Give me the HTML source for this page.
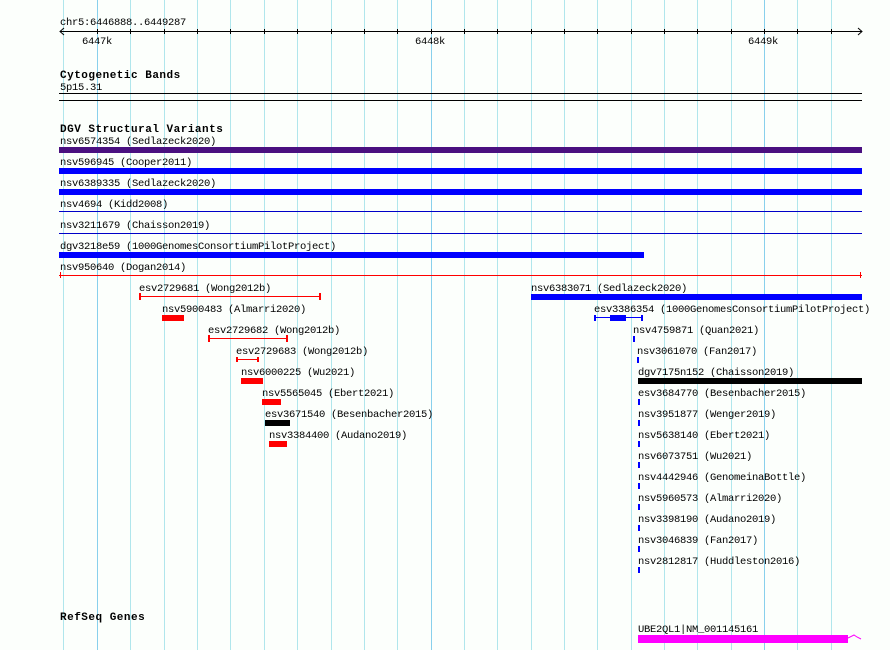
<!DOCTYPE html>
<html><head><meta charset="utf-8"><style>
html,body{margin:0;padding:0;background:#fcfffc;}
svg{display:block;}
text{font-family:"Liberation Mono","DejaVu Sans Mono",monospace;font-size:10.5px;letter-spacing:-0.3px;fill:#000;}
.h{font-weight:bold;font-size:11px;letter-spacing:0.5px;}
</style></head><body>
<svg width="890" height="650" xmlns="http://www.w3.org/2000/svg">
<rect width="890" height="650" fill="#fcfffc"/>
<g stroke="#b0e6ec" stroke-width="1">
<line x1="63.5" y1="0" x2="63.5" y2="650"/>
<line x1="130.5" y1="0" x2="130.5" y2="650"/>
<line x1="164.5" y1="0" x2="164.5" y2="650"/>
<line x1="197.5" y1="0" x2="197.5" y2="650"/>
<line x1="230.5" y1="0" x2="230.5" y2="650"/>
<line x1="264.5" y1="0" x2="264.5" y2="650"/>
<line x1="297.5" y1="0" x2="297.5" y2="650"/>
<line x1="331.5" y1="0" x2="331.5" y2="650"/>
<line x1="364.5" y1="0" x2="364.5" y2="650"/>
<line x1="397.5" y1="0" x2="397.5" y2="650"/>
<line x1="464.5" y1="0" x2="464.5" y2="650"/>
<line x1="497.5" y1="0" x2="497.5" y2="650"/>
<line x1="531.5" y1="0" x2="531.5" y2="650"/>
<line x1="564.5" y1="0" x2="564.5" y2="650"/>
<line x1="597.5" y1="0" x2="597.5" y2="650"/>
<line x1="631.5" y1="0" x2="631.5" y2="650"/>
<line x1="664.5" y1="0" x2="664.5" y2="650"/>
<line x1="697.5" y1="0" x2="697.5" y2="650"/>
<line x1="731.5" y1="0" x2="731.5" y2="650"/>
<line x1="797.5" y1="0" x2="797.5" y2="650"/>
<line x1="831.5" y1="0" x2="831.5" y2="650"/>
</g>
<g stroke="#88d0ec" stroke-width="1">
<line x1="97.5" y1="0" x2="97.5" y2="650"/>
<line x1="431.5" y1="0" x2="431.5" y2="650"/>
<line x1="764.5" y1="0" x2="764.5" y2="650"/>
</g>
<text x="60" y="25">chr5:6446888..6449287</text>
<g stroke="#000" stroke-width="1" fill="none">
<line x1="60" y1="31.5" x2="862" y2="31.5"/>
<polyline points="64,28 60,31.5 64,35"/>
<polyline points="858,28 862,31.5 858,35"/>
<path d="M97.5 29v5M130.5 29v5M164.5 29v5M197.5 29v5M230.5 29v5M264.5 29v5M297.5 29v5M331.5 29v5M364.5 29v5M397.5 29v5M431.5 29v5M464.5 29v5M497.5 29v5M531.5 29v5M564.5 29v5M597.5 29v5M631.5 29v5M664.5 29v5M697.5 29v5M731.5 29v5M764.5 29v5M797.5 29v5M831.5 29v5"/>
</g>
<text x="82" y="44">6447k</text>
<text x="415" y="44">6448k</text>
<text x="748" y="44">6449k</text>
<text class="h" x="60" y="78">Cytogenetic Bands</text>
<text x="60" y="90">5p15.31</text>
<rect x="59" y="93" width="803" height="1" fill="#000"/>
<rect x="59" y="100" width="803" height="1" fill="#000"/>
<text class="h" x="60" y="132">DGV Structural Variants</text>
<text x="60" y="144">nsv6574354 (Sedlazeck2020)</text>
<rect x="59" y="147" width="803" height="6" fill="#4a1080"/>
<text x="60" y="165">nsv596945 (Cooper2011)</text>
<rect x="59" y="168" width="803" height="6" fill="#0000ff"/>
<text x="60" y="186">nsv6389335 (Sedlazeck2020)</text>
<rect x="59" y="189" width="803" height="6" fill="#0000ff"/>
<text x="60" y="207">nsv4694 (Kidd2008)</text>
<rect x="59" y="211" width="803" height="1" fill="#0000c8"/>
<text x="60" y="228">nsv3211679 (Chaisson2019)</text>
<rect x="59" y="233" width="803" height="1" fill="#0000c8"/>
<text x="60" y="249">dgv3218e59 (1000GenomesConsortiumPilotProject)</text>
<rect x="59" y="252" width="585" height="6" fill="#0000ff"/>
<text x="60" y="270">nsv950640 (Dogan2014)</text>
<g fill="#ff0000">
<rect x="59" y="275" width="803" height="1"/><rect x="60" y="272" width="1" height="6"/><rect x="860" y="272" width="1" height="6"/>
</g>
<text x="139" y="291">esv2729681 (Wong2012b)</text>
<g fill="#ff0000"><rect x="139" y="296" width="181" height="1"/><rect x="139" y="293" width="2" height="7"/><rect x="319" y="293" width="2" height="7"/></g>
<text x="531" y="291">nsv6383071 (Sedlazeck2020)</text>
<rect x="531" y="294" width="331" height="6" fill="#0000ff"/>
<text x="162" y="312">nsv5900483 (Almarri2020)</text>
<rect x="162" y="315" width="22" height="6" fill="#ff0000"/>
<text x="594" y="312">esv3386354 (1000GenomesConsortiumPilotProject)</text>
<g fill="#0000ff"><rect x="594" y="317" width="48" height="1"/><rect x="594" y="315" width="2" height="6"/><rect x="641" y="315" width="2" height="6"/><rect x="610" y="315" width="16" height="6"/></g>
<text x="208" y="333">esv2729682 (Wong2012b)</text>
<g fill="#ff0000"><rect x="208" y="338" width="79" height="1"/><rect x="208" y="335" width="2" height="7"/><rect x="286" y="335" width="2" height="7"/></g>
<text x="633" y="333">nsv4759871 (Quan2021)</text>
<rect x="633" y="336" width="2" height="6" fill="#0000ff"/>
<text x="236" y="354">esv2729683 (Wong2012b)</text>
<g fill="#ff0000"><rect x="236" y="359" width="22" height="1"/><rect x="236" y="357" width="2" height="5"/><rect x="257" y="357" width="2" height="5"/></g>
<text x="637" y="354">nsv3061070 (Fan2017)</text>
<rect x="637" y="357" width="2" height="6" fill="#0000ff"/>
<text x="241" y="375">nsv6000225 (Wu2021)</text>
<rect x="241" y="378" width="22" height="6" fill="#ff0000"/>
<text x="638" y="375">dgv7175n152 (Chaisson2019)</text>
<rect x="638" y="378" width="224" height="6" fill="#000"/>
<text x="262" y="396">nsv5565045 (Ebert2021)</text>
<rect x="262" y="399" width="19" height="6" fill="#ff0000"/>
<text x="638" y="396">esv3684770 (Besenbacher2015)</text>
<text x="265" y="417">esv3671540 (Besenbacher2015)</text>
<rect x="265" y="420" width="25" height="6" fill="#000"/>
<text x="638" y="417">nsv3951877 (Wenger2019)</text>
<text x="269" y="438">nsv3384400 (Audano2019)</text>
<rect x="269" y="441" width="18" height="6" fill="#ff0000"/>
<text x="638" y="438">nsv5638140 (Ebert2021)</text>
<text x="638" y="459">nsv6073751 (Wu2021)</text>
<text x="638" y="480">nsv4442946 (GenomeinaBottle)</text>
<text x="638" y="501">nsv5960573 (Almarri2020)</text>
<text x="638" y="522">nsv3398190 (Audano2019)</text>
<text x="638" y="543">nsv3046839 (Fan2017)</text>
<text x="638" y="564">nsv2812817 (Huddleston2016)</text>
<g fill="#0000ff">
<rect x="638" y="399" width="2" height="6"/><rect x="638" y="420" width="2" height="6"/><rect x="638" y="441" width="2" height="6"/>
<rect x="638" y="462" width="2" height="6"/><rect x="638" y="483" width="2" height="6"/><rect x="638" y="504" width="2" height="6"/>
<rect x="638" y="525" width="2" height="6"/><rect x="638" y="546" width="2" height="6"/><rect x="638" y="567" width="2" height="6"/>
</g>
<text class="h" x="60" y="620">RefSeq Genes</text>
<text x="638" y="632">UBE2QL1|NM_001145161</text>
<rect x="638" y="635" width="210" height="8" fill="#ff00ff"/>
<polyline points="848,638 854,635 857,637 861,639" fill="none" stroke="#ff00ff" stroke-width="1"/>
</svg>
</body></html>
